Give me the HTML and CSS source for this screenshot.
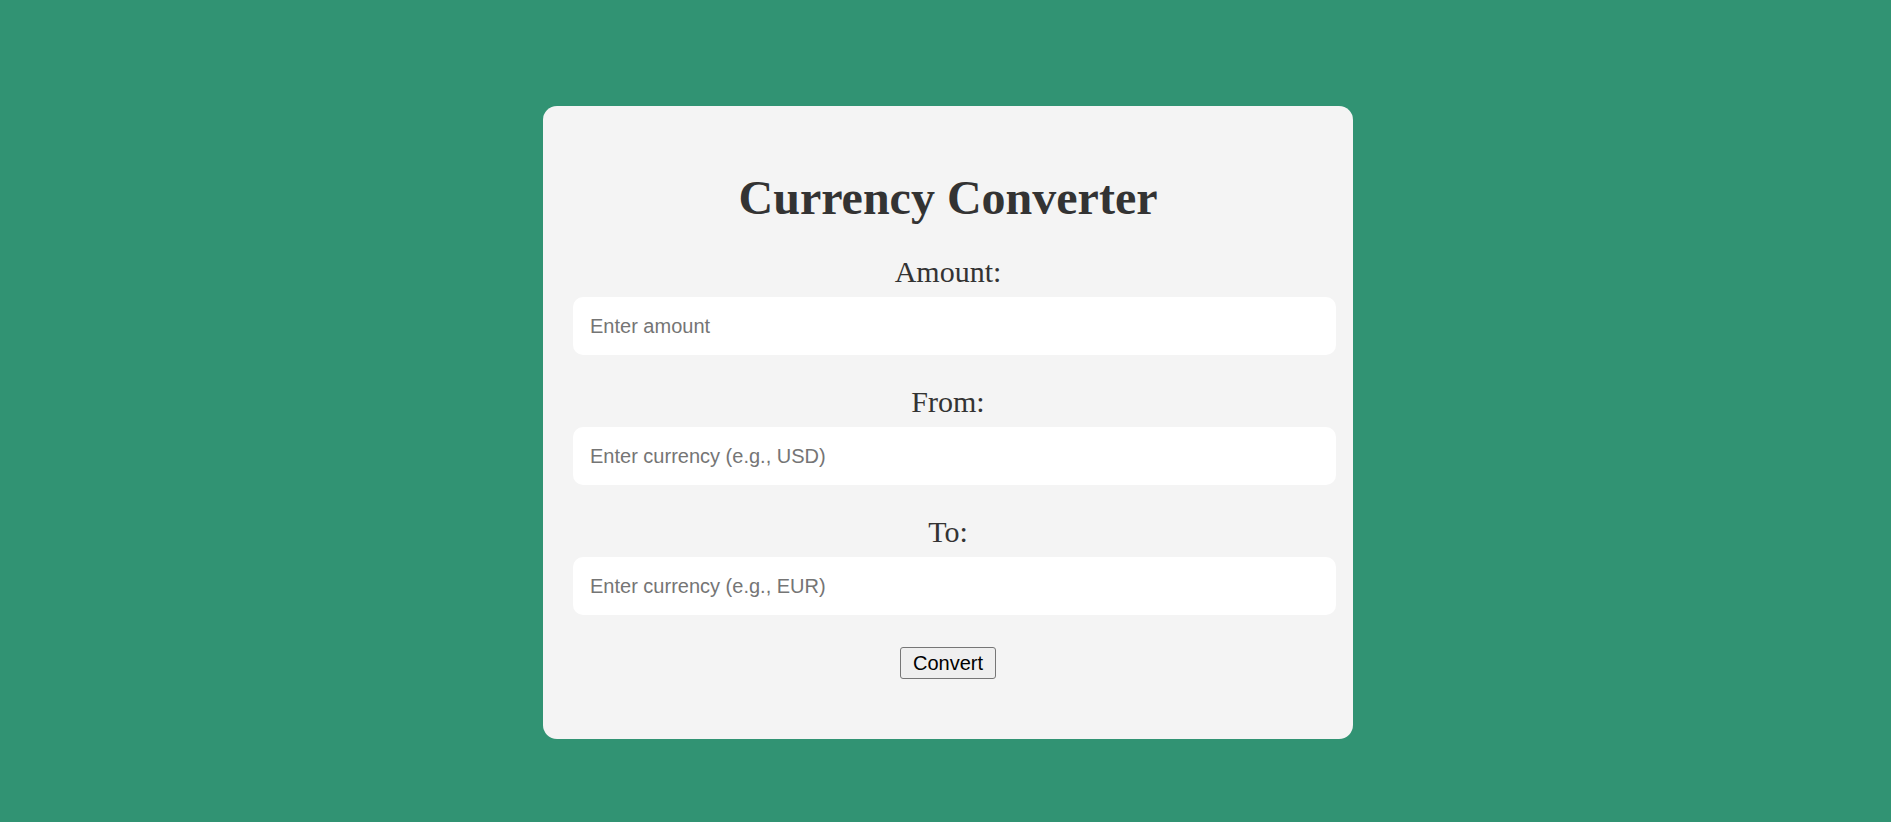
FILE: index.html
```html
<!DOCTYPE html>
<html lang="en">
<head>
<meta charset="utf-8">
<title>Currency Converter</title>
<link rel="stylesheet" href="styles.css">
</head>
<body>
<main class="page">
  <section class="card">
    <h1 class="title">Currency Converter</h1>
    <form class="form">
      <label class="label" for="amount">Amount:</label>
      <input class="field" id="amount" type="text" placeholder="Enter amount">
      <label class="label" for="from">From:</label>
      <input class="field" id="from" type="text" placeholder="Enter currency (e.g., USD)">
      <label class="label" for="to">To:</label>
      <input class="field" id="to" type="text" placeholder="Enter currency (e.g., EUR)">
      <button class="btn" type="button">Convert</button>
    </form>
  </section>
</main>
</body>
</html>
```

FILE: styles.css
```css
html, body {
  margin: 0;
  padding: 0;
}
body {
  background: #319373;
  font-family: "Liberation Serif", "Times New Roman", serif;
  color: #333333;
  height: 822px;
  overflow: hidden;
}
.page {
  display: flex;
  justify-content: center;
  align-items: flex-start;
  padding: 106px 0 0 5px;
}
.card {
  width: 810px;
  box-sizing: border-box;
  background: #f4f4f4;
  border-radius: 14px;
  padding: 32px 30px 60px;
  text-align: center;
}
.title {
  font-size: 48px;
  font-weight: bold;
  margin: 32px 0 29px;
  line-height: 55px;
  color: #333333;
}
.form {
  display: flex;
  flex-direction: column;
  align-items: center;
}
.label {
  display: block;
  font-size: 30px;
  line-height: 35px;
  margin-bottom: 8px;
  color: #333333;
}
.field {
  display: block;
  align-self: flex-start;
  width: calc(100% + 13px);
  height: 58px;
  box-sizing: border-box;
  border: none;
  border-radius: 10px;
  background: #ffffff;
  padding: 0 17px;
  margin: 0 0 29px;
  font-family: "Liberation Sans", Arial, sans-serif;
  font-size: 20px;
  color: #333333;
  outline: none;
}
.field:last-of-type {
  margin-bottom: 32px;
}
.field::placeholder {
  color: #757575;
}
.btn {
  font-family: "Liberation Sans", Arial, sans-serif;
  font-size: 20px;
  line-height: 24px;
  padding: 3px 11.5px;
  border: 1px solid #767676;
  border-radius: 3px;
  background: #efefef;
  color: #000000;
  margin: 0;
}
```
